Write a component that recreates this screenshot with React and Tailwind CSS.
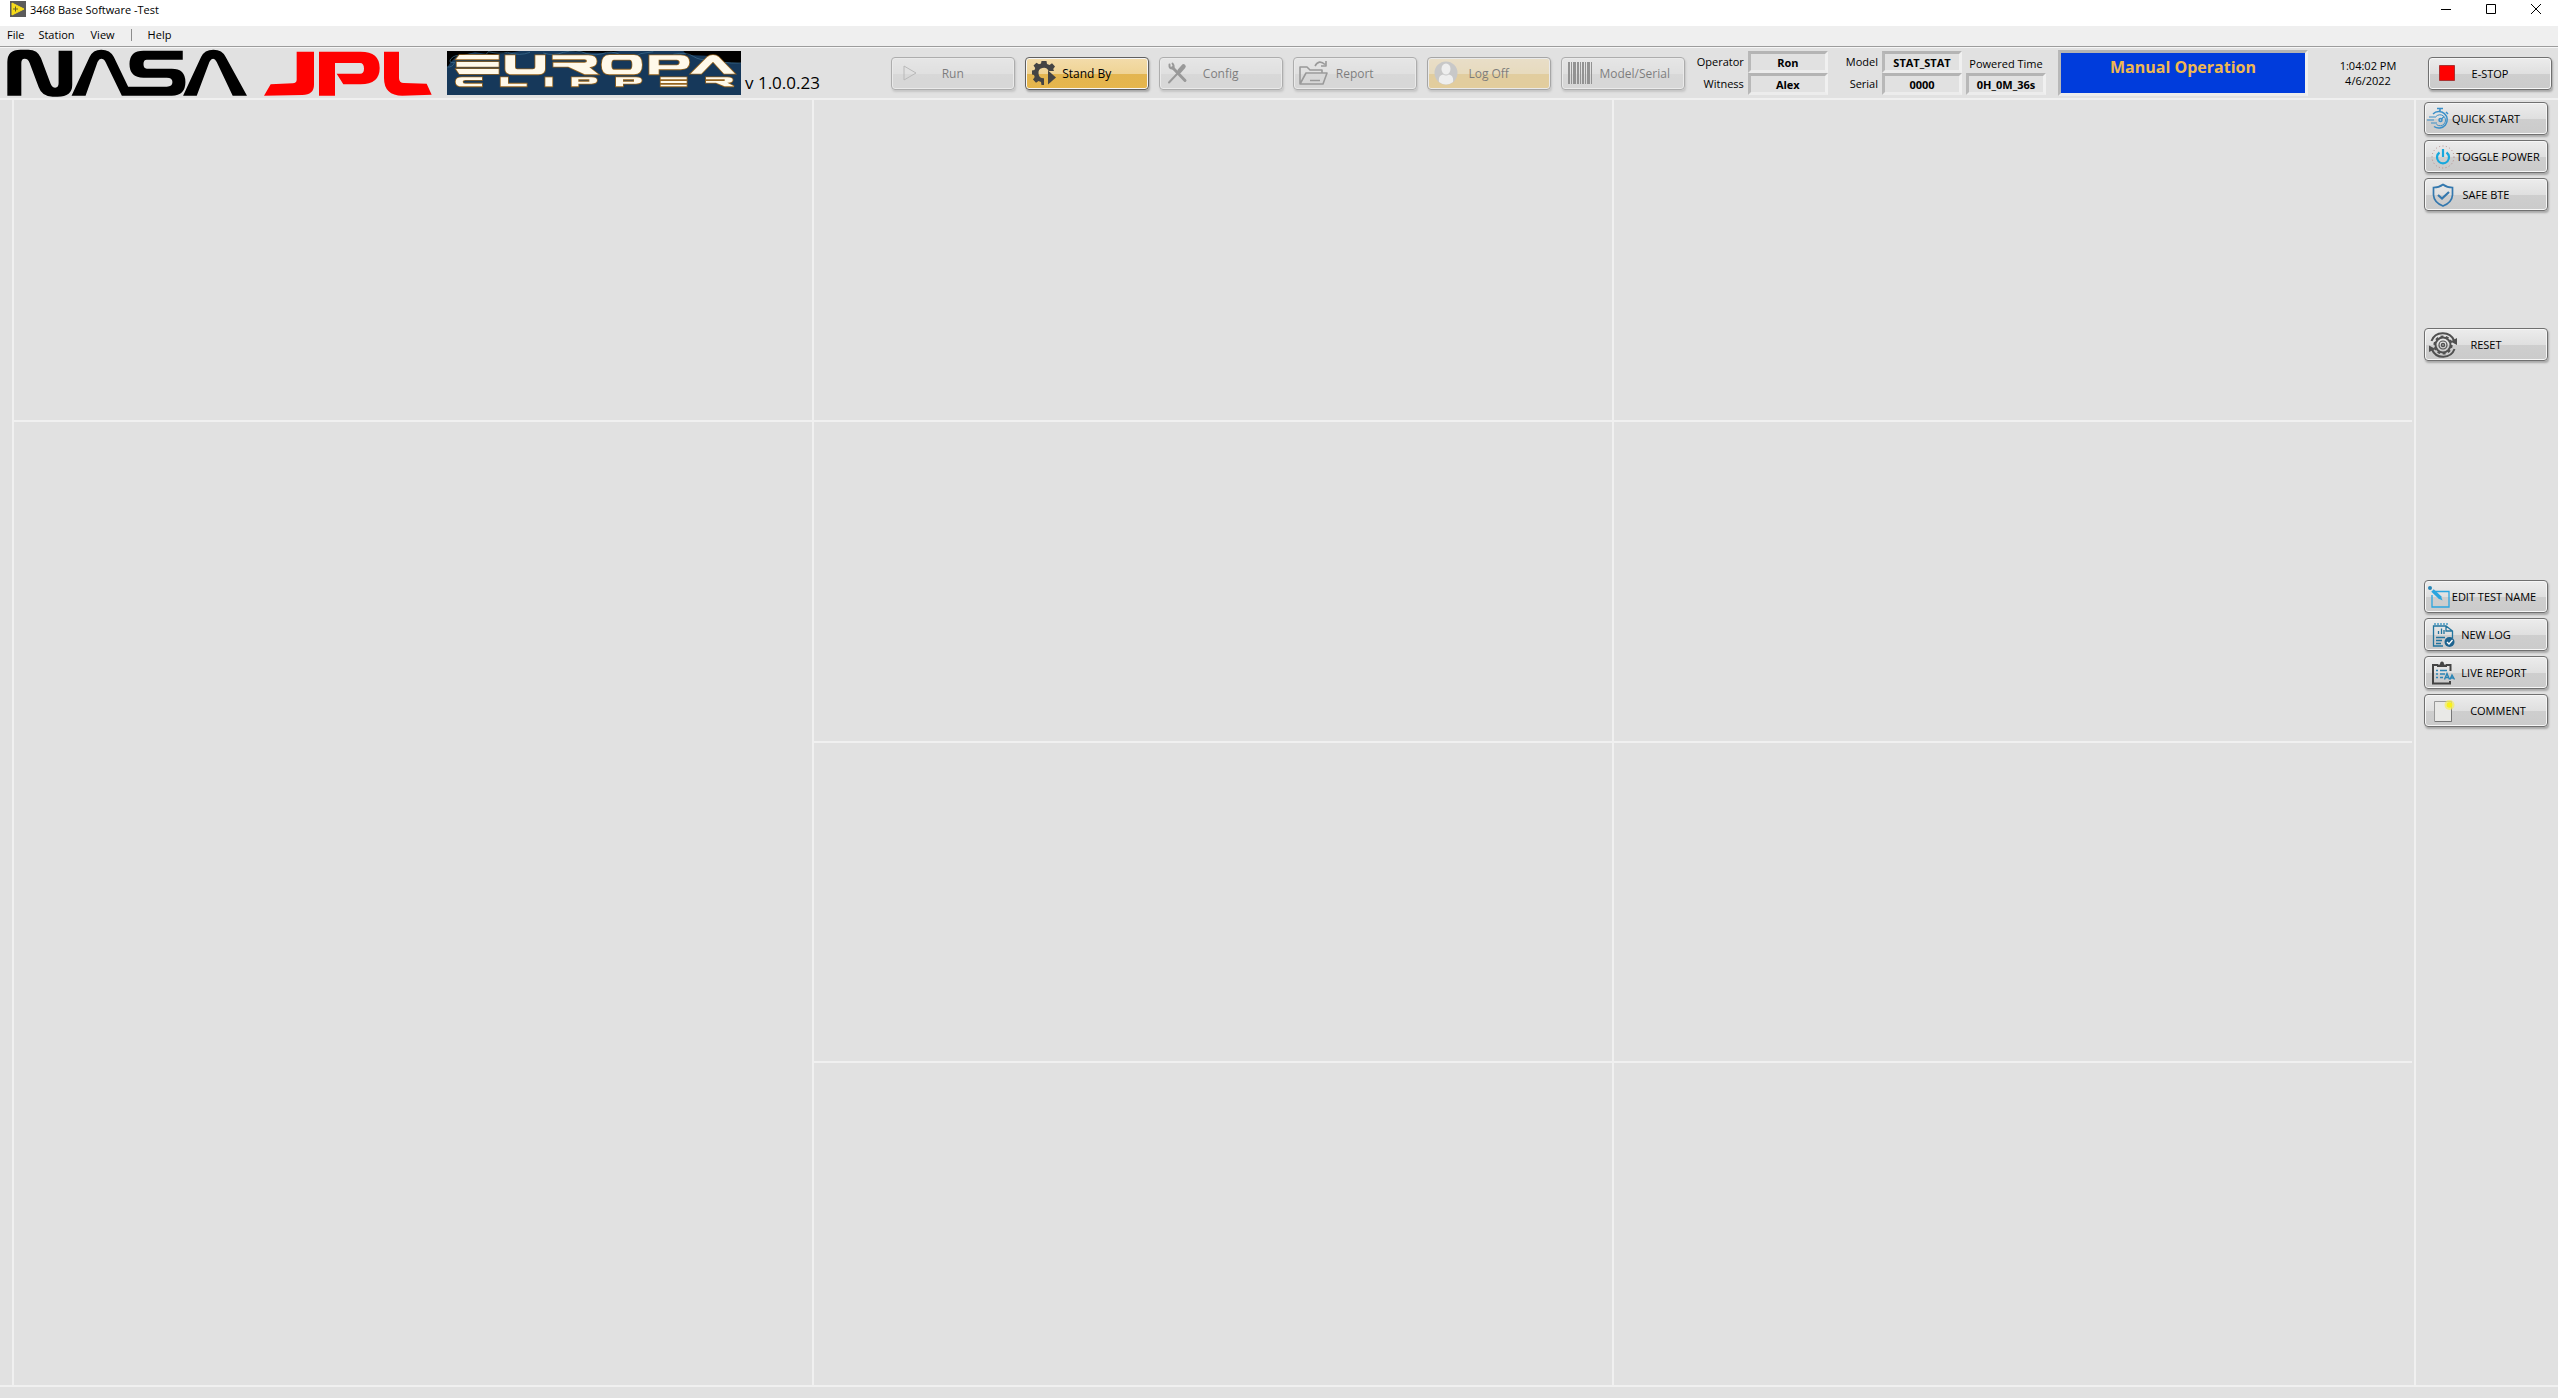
import React from "react";

function NasaLogo() {
  return (
    <svg role="img" aria-label="NASA" viewBox="20 148 724 144" className="h-12 w-[241px] shrink-0">
      <path d="M21 288V187Q21 150 60 150H84Q112 150 122 175L151 252Q156 264 165 264Q175 264 175 250V153H216V255Q216 291 172 291H157Q125 291 115 262L88 190Q84 177 73 177Q63 177 63 190V288Z" />
      <path d="M214 288L268 172Q278 150 303 150Q330 150 341 172L384 261H500Q517 261 517 247Q517 234 500 234H430Q388 234 388 193Q388 153 430 153H548V180H440Q430 180 430 193Q430 207 440 207H515Q556 207 556 247Q556 288 515 288H365L316 187Q311 177 303 177Q297 177 292 187L256 288Z" />
      <path d="M549 288L603 172Q613 150 640 150Q667 150 677 172L741 288H698L650 187Q645 177 639 177Q633 177 628 187L590 288Z" />
    </svg>
  );
}

function JplLogo() {
  return (
    <svg role="img" aria-label="JPL" viewBox="790 154 504 135" className="h-[45px] w-[168px] shrink-0" fill="#ff0000">
      <path d="M888 156H940V255Q940 285 905 286L790 288L810 254L876 251Q888 250 888 240Z" />
      <path fillRule="evenodd" d="M955 156H1080Q1137 156 1137 205Q1137 254 1080 254H1028L1008 222H1078Q1090 222 1090 207Q1090 190 1078 190H1003V288H955Z" />
      <path d="M1150 156H1195V235Q1195 250 1210 250L1278 252L1293 285L1205 288Q1150 288 1150 235Z" />
    </svg>
  );
}

function EuropaLogo() {
  return (
    <svg role="img" aria-label="Europa Clipper" viewBox="81 156 882 132" className="h-11 w-[294px] shrink-0 bg-[#16385a]">
      <path d="M81 156H300L225 168L165 160L110 172L92 190L81 206Z" fill="#000" />
      <path d="M430 156H600L560 162L480 160Z" fill="#000" />
      <path d="M790 156H963V193L900 188L860 170L800 168Z" fill="#000" />
      <g fill="none" stroke="#3f7394" strokeWidth="2">
        <path d="M81 204Q98 206 104 190Q84 194 92 180Q106 164 128 172Q150 160 172 170Q200 172 205 158Q240 166 262 160Q300 172 330 160" />
        <path d="M370 162Q400 172 430 160Q470 150 500 164Q530 172 560 160Q590 158 600 168Q640 180 662 164L700 158" />
        <path d="M760 166Q800 158 820 172Q840 186 870 180Q900 194 963 192" />
      </g>
      <g fill="#fff9ea" stroke="#94631f" strokeWidth="5" paintOrder="stroke" fillRule="evenodd">
        <path d="M118 168H236V181H108Z M110 189H236V203H110Z M108 210H236V225H118Z" />
        <path d="M256 169H285V205Q285 211 292 211H338Q346 211 346 205V169H375V211Q375 226 355 226H276Q256 226 256 211Z" />
        <path d="M398 169H505Q530 169 530 187Q530 203 508 205L535 226H494L445 203H400V191H493Q501 191 501 186Q501 181 493 181H398Z" />
        <path d="M568 168H642Q666 168 666 197Q666 226 642 226H568Q545 226 545 197Q545 168 568 168ZM582 182Q574 182 574 197Q574 212 582 212H629Q637 212 637 197Q637 182 629 182Z" />
        <path d="M688 226V169H782Q808 169 808 190Q808 211 782 211H716V226ZM716 182V199H770Q779 199 779 190Q779 182 770 182Z" />
        <path d="M812 224L862 174Q869 168 879 168Q889 168 896 174L945 224H912L879 188L844 224Z" />
        <path d="M186 235H126Q107 235 107 248Q107 262 126 262H186V254H136Q128 254 128 248Q128 243 136 243H186Z" />
        <path d="M242 235H264V254H320V262H242Z" />
        <path d="M376 235H397V262H376Z" />
        <path d="M455 235H514Q531 235 531 244Q531 254 514 254H475V262H455ZM475 241V248H508V241Z" />
        <path d="M588 235H648Q665 235 665 244Q665 254 648 254H609V262H588ZM609 241V248H642V241Z" />
        <path d="M722 235H800V241H722Z M722 246H800V252H722Z M722 257H800V262H722Z" />
        <path d="M858 235H922Q938 235 938 243Q938 251 922 251L942 262H914L888 251H858V246H914V241H858Z" />
      </g>
    </svg>
  );
}

const ICON = "h-6 w-6 shrink-0";

function RunIcon() {
  return (
    <svg viewBox="0 0 24 24" className={ICON} fill="none" stroke="#8a8a8a" strokeWidth="1">
      <path d="M6 5L18 12L6 19Z" />
    </svg>
  );
}

function GearPlayIcon() {
  return (
    <svg viewBox="0 0 24 24" className={ICON}>
      <g fill="#444">
        <path fillRule="evenodd" d="M9.5 0H14.5L15 3L17.5 4L20 2.3L23 5.5L21.2 8L22 10H16.5A5.2 5.2 0 1 0 12 17.2V24H9.5L9 21L6.5 20L4 21.7L1 18.5L2.7 16L2 14L0 13.5V9.5L2.5 9L3.2 7L1.5 4.5L4.5 1.8L7 3.3L9 2.6Z" />
        <path d="M16 9.5L24 16.5L16 23.5Z" />
      </g>
    </svg>
  );
}

function ToolsIcon() {
  return (
    <svg viewBox="0 0 24 24" className={ICON} fill="none" stroke="#444" strokeLinecap="round">
      <path d="M6.500 6.500L19 19.500" strokeWidth="3" />
      <path d="M3.500 3.500Q3 8 7 7.500Q8.500 5 6.500 2.500" strokeWidth="2" />
      <path d="M17.500 5.500L13.500 10" strokeWidth="4.500" />
      <path d="M12 12L3 21.500" strokeWidth="2" />
    </svg>
  );
}

function FolderIcon() {
  return (
    <svg viewBox="0 0 30 26" className="h-[26px] w-[30px] shrink-0" fill="none" stroke="#444" strokeWidth="1.600" strokeLinejoin="round">
      <path d="M2 24V7H9L12 10H24V13M2 24L8 13H29L25 24ZM12 20.500H22" />
      <path d="M17 6Q21 -1 27 4.500M28 1V6H23" />
    </svg>
  );
}

function UserIcon() {
  return (
    <svg viewBox="0 0 24 24" className={ICON}>
      <circle cx="12" cy="12" r="11.5" fill="#ababab" />
      <ellipse cx="12" cy="8" rx="4.500" ry="5.500" fill="#fff" />
      <path d="M5 21Q4 14.500 9 13.500Q12 15.500 15 13.500Q20 14.500 19 21Q12 26 5 21Z" fill="#fff" />
    </svg>
  );
}

function BarcodeIcon() {
  return (
    <svg viewBox="0 0 24 24" className={ICON} fill="#333">
      <path d="M0 1h2v22H0zM3 1h1v22H3zM5 1h3v22H5zM9 1h2v22H9zM12 1h1v22h-1zM14 1h2v22h-2zM17 1h1v22h-1zM19 1h3v22h-3zM23 1h1v22h-1z" />
    </svg>
  );
}

function StopIcon() {
  return (
    <svg viewBox="0 0 24 24" className={ICON}>
      <path d="M4.500 4.500h15v15h-15z" fill="#f00" stroke="#a33" strokeWidth="1" />
    </svg>
  );
}

function StopwatchIcon() {
  return (
    <svg viewBox="0 0 24 24" className={ICON} fill="none" stroke="#3a8fc8" strokeWidth="1.500">
      <path d="M10 1.500H16M13 2V5M19 5L21 7M6 7A8.300 8.300 0 1 1 7 19.500" />
      <path d="M9 9.500A5.500 5.500 0 1 1 9.500 17.500" strokeWidth="1" />
      <circle cx="13.500" cy="13" r="1.500" />
      <path d="M14.500 12L17 9.500M2 10H9M0 13H7M4 16H10" strokeWidth="1.200" />
    </svg>
  );
}

function PowerIcon() {
  return (
    <svg viewBox="0 0 24 24" className={ICON} fill="none">
      <circle cx="12" cy="12" r="11" stroke="#b58a8a" strokeWidth="1" strokeDasharray="1 2.400" />
      <path d="M8.500 7.500A6 6 0 1 0 15.500 7.500M12 4V12" stroke="#18a8dd" strokeWidth="2.200" />
    </svg>
  );
}

function ShieldIcon() {
  return (
    <svg viewBox="0 0 24 24" className={ICON} fill="none" stroke="#3478ae" strokeWidth="1.700">
      <path d="M12 1.500Q16 4.500 21.500 4.500V12Q21 19.500 12 23Q3 19.500 2.500 12V4.500Q8 4.500 12 1.500Z" />
      <path d="M7 12L11 15.500L18 9" strokeWidth="2.200" />
    </svg>
  );
}

function ResetIcon() {
  return (
    <svg viewBox="0 0 28 26" className="h-[26px] w-7 shrink-0" fill="none" stroke="#505050">
      <circle cx="14" cy="13" r="7.500" strokeWidth="2" />
      <circle cx="14" cy="13" r="8.800" strokeWidth="1.600" strokeDasharray="3 2.520" />
      <circle cx="14" cy="13" r="4" strokeWidth="1.200" />
      <circle cx="14" cy="13" r="1.500" strokeWidth="1.500" />
      <path d="M2.500 9A12 11.500 0 0 1 25 8.500M25.500 17A12 11.500 0 0 1 3 17.500" strokeWidth="2" />
      <path d="M28 6V13L21.500 9.500ZM0 20V13.500L6.500 17Z" fill="#505050" stroke="none" />
    </svg>
  );
}

function EditIcon() {
  return (
    <svg viewBox="0 0 24 24" className={ICON} fill="none" stroke="#2aa5df">
      <path d="M8 6.500H22V22H5V10" strokeWidth="1.300" />
      <path d="M5.500 5.500L13.500 13" strokeWidth="3.600" />
      <circle cx="3" cy="3" r="2" fill="#2787b8" stroke="none" />
      <path d="M15.500 15.500L11.500 13.500L14 11.500Z" fill="#2aa5df" stroke="none" />
    </svg>
  );
}

function LogIcon() {
  return (
    <svg viewBox="0 0 24 24" className={ICON} fill="none" stroke="#22749e" strokeWidth="1.300">
      <path d="M12 23H2.500V3H15L21.500 8V15M15 3V8H21.500M7.500 11V8M10.500 11V5.500M13 11V7M5 14.500H14M5 17.500H11M5 20.500H10" />
      <path d="M3 1H18" stroke="#4a9bc2" strokeDasharray="2 1" />
      <circle cx="18.500" cy="19" r="5" fill="#1d638f" stroke="none" />
      <path d="M16 19L18 21L21.500 17" stroke="#fff" />
    </svg>
  );
}

function ReportIcon() {
  return (
    <svg viewBox="0 0 24 24" className={ICON} fill="none">
      <path d="M7 4H2V22.500H19V20M15 4H19.500V10" stroke="#444" strokeWidth="2" />
      <path d="M6 6V3.500H9Q9 0.500 11 0.500Q13 0.500 13 3.500H16V6Z" fill="#444" />
      <path d="M5 9.500H7M9 9.500H16M5 13H7M9 13H14M5 16.500H7M9 16.500H12" stroke="#2c86b8" strokeWidth="1.300" />
      <path d="M13.500 18.500L16 12.500L18.500 18.500M14.500 16.500H17.500M19 18.500L21 14L23.500 18.500M20 17H23" stroke="#2a84b4" strokeWidth="1.400" />
    </svg>
  );
}

function NoteIcon() {
  return (
    <svg viewBox="0 0 24 24" className={ICON}>
      <path d="M3.500 2.500H20.500V22.500H3.500Z" fill="#e9e9e7" stroke="#999" />
      <path d="M4 22.500H20.500V9" fill="none" stroke="#777" />
      <circle cx="18.500" cy="6" r="5" fill="#f5ee58" opacity="0.700" />
      <circle cx="18.500" cy="6" r="2.800" fill="#f8f01c" />
    </svg>
  );
}

const LOOKS = {
  plain: "border-[#707070] bg-[linear-gradient(#ececec,#dfdfdf_52%,#cecece_53%,#cbcbcb)] text-black",
  off: "border-[#707070] bg-[linear-gradient(#ececec,#dfdfdf_52%,#cecece_53%,#cbcbcb)] text-black opacity-45",
  gold: "border-[#606060] bg-[linear-gradient(#f3dcab,#efd394_52%,#e3b550_53%,#e6b64c)] text-black",
  goldOff: "border-[#606060] bg-[linear-gradient(#f3dcab,#efd394_52%,#e3b550_53%,#e6b64c)] text-black opacity-45",
};

function Button({ icon, label, look = "plain", inset = "pl-1.5", shift = "", size = "text-[12px]" }) {
  return (
    <button
      type="button"
      disabled={look === "off" || look === "goldOff"}
      className={`grid h-[33px] w-31 shrink-0 items-center rounded-[4px] border shadow-[inset_0_0_0_1px_#f6f6f6,1px_2px_2px_#a8a8a8] ${LOOKS[look]}`}
    >
      <span className={`col-start-1 row-start-1 justify-self-start ${inset}`}>{icon}</span>
      <span className={`col-start-1 row-start-1 pt-0.5 whitespace-nowrap ${size} ${shift}`}>{label}</span>
    </button>
  );
}

function Field({ id, label, value }) {
  return (
    <>
      <label htmlFor={id} className="text-right">{label}</label>
      <input
        id={id}
        readOnly
        defaultValue={value}
        className="h-[22px] w-20 border-3 border-t-[#b4b4b4] border-r-[#f0f0f0] border-b-[#ececec] border-l-[#b8b8b8] bg-[#e1e1e1] text-center text-[11px] font-bold"
      />
    </>
  );
}

function Panels() {
  const cell = "bg-[#e1e1e1]";
  return (
    <main className="mr-0.5 ml-3 grid grow grid-cols-3 grid-rows-[320fr_319fr_318fr_322fr] gap-0.5 bg-[#f0f0f0] pl-0.5">
      <section className={cell} />
      <section className={cell} />
      <section className={cell} />
      <section className={`${cell} row-span-3`} />
      <section className={cell} />
      <section className={cell} />
      <section className={cell} />
      <section className={cell} />
      <section className={cell} />
      <section className={cell} />
    </main>
  );
}

export default function App() {
  return (
    <div className="flex min-h-screen flex-col bg-[#e1e1e1] font-['Open_Sans','Noto_Sans',sans-serif] text-[11px] text-black">
      <header className="flex h-[26px] items-start bg-white pl-2.5">
        <svg viewBox="0 0 16 16" className="mt-px size-4">
          <path d="M0 0H16V16H0Z" fill="#5b5b5b" />
          <path d="M2 2L14 8L2 14Z" fill="#f7dc1b" stroke="#f7dc1b" strokeLinejoin="round" />
          <path d="M3 8H8M5.500 5.500V10.500" stroke="#6a6222" />
        </svg>
        <h1 className="ml-1 text-[11px] leading-5">3468 Base Software -Test</h1>
        <div className="ml-auto flex">
          <button type="button" aria-label="Minimize" className="grid h-[18px] w-[45px] place-items-center">
            <svg viewBox="0 0 12 12" className="size-3" fill="none" stroke="#000"><path d="M1 6.500H11" /></svg>
          </button>
          <button type="button" aria-label="Maximize" className="grid h-[18px] w-[45px] place-items-center">
            <svg viewBox="0 0 12 12" className="size-3" fill="none" stroke="#000"><path d="M1.500 1.500H10.500V10.500H1.500Z" /></svg>
          </button>
          <button type="button" aria-label="Close" className="grid h-[18px] w-[45px] place-items-center">
            <svg viewBox="0 0 12 12" className="size-3" fill="none" stroke="#000"><path d="M1 1L11 11M11 1L1 11" /></svg>
          </button>
        </div>
      </header>

      <nav className="flex h-[21px] items-center border-b border-[#9c9c9c] bg-[#efefef] pb-0.5 pl-[7px]">
        <button type="button">File</button>
        <button type="button" className="ml-3.5">Station</button>
        <button type="button" className="ml-4">View</button>
        <span className="ml-4 h-3 border-l border-[#8c8c8c]" />
        <button type="button" className="ml-4">Help</button>
      </nav>

      <div className="flex h-[53px] items-center border-t border-b-2 border-t-[#f6f6f6] border-b-[#f0f0f0] pl-[7px]">
        <NasaLogo />
        <div className="ml-4 flex grow items-center">
          <JplLogo />
          <div className="ml-[15px]"><EuropaLogo /></div>
          <span className="ml-1 pt-5 text-[17px] leading-6">v 1.0.0.23</span>
        </div>

        <div className="flex gap-2.5">
          <Button look="off" icon={<RunIcon />} label="Run" />
          <Button look="gold" icon={<GearPlayIcon />} label="Stand By" />
          <Button look="off" icon={<ToolsIcon />} label="Config" inset="pl-1.5" />
          <Button look="off" icon={<FolderIcon />} label="Report" inset="pl-1" />
          <Button look="goldOff" icon={<UserIcon />} label="Log Off" />
          <Button look="off" icon={<BarcodeIcon />} label="Model/Serial" shift="pl-6" />
        </div>

        <div className="ml-3 grid grid-cols-[auto_auto] items-center gap-x-1">
          <Field id="operator" label="Operator" value="Ron" />
          <Field id="witness" label="Witness" value="Alex" />
        </div>
        <div className="ml-[18px] grid grid-cols-[auto_auto] items-center gap-x-1">
          <Field id="model" label="Model" value="STAT_STAT" />
          <Field id="serial" label="Serial" value="0000" />
        </div>
        <div className="ml-1 flex flex-col items-center">
          <label htmlFor="powered" className="pt-1 leading-[18px]">Powered Time</label>
          <input
            id="powered"
            readOnly
            defaultValue="0H_0M_36s"
            className="h-[22px] w-20 border-3 border-t-[#b4b4b4] border-r-[#f0f0f0] border-b-[#ececec] border-l-[#b8b8b8] bg-[#e1e1e1] text-center text-[11px] font-bold"
          />
        </div>
        <div role="status" className="ml-3 h-[46px] w-[250px] border-3 border-t-[#b4b4b4] border-r-[#f0f0f0] border-b-[#ececec] border-l-[#b8b8b8] bg-[#003cdc] pt-0.5 text-center text-[16px] leading-6 font-bold text-[#f0b850]">
          Manual Operation
        </div>
        <div className="w-30 text-center leading-[15px]">
          <p>1:04:02 PM</p>
          <p>4/6/2022</p>
        </div>
        <div className="mr-1.5">
          <Button icon={<StopIcon />} label="E-STOP" size="text-[11px]" />
        </div>
      </div>

      <div className="flex grow">
        <Panels />
        <aside className="flex w-36 shrink-0 flex-col gap-[5px] border-l-2 border-[#f0f0f0] pt-0.5 pl-2">
          <Button icon={<StopwatchIcon />} label="QUICK START" inset="pl-0.5" size="text-[11px]" />
          <Button icon={<PowerIcon />} label="TOGGLE POWER" shift="pl-6" size="text-[11px]" />
          <Button icon={<ShieldIcon />} label="SAFE BTE" size="text-[11px]" />
          <div className="mt-28">
            <Button icon={<ResetIcon />} label="RESET" inset="pl-1" size="text-[11px]" />
          </div>
          <div className="mt-[214px]">
            <Button icon={<EditIcon />} label="EDIT TEST NAME" inset="pl-0.5" shift="pl-4" size="text-[11px]" />
          </div>
          <Button icon={<LogIcon />} label="NEW LOG" size="text-[11px]" />
          <Button icon={<ReportIcon />} label="LIVE REPORT" shift="pl-4" size="text-[11px]" />
          <Button icon={<NoteIcon />} label="COMMENT" shift="pl-6" size="text-[11px]" />
        </aside>
      </div>

      <footer className="h-[13px] border-t-2 border-[#f0f0f0]" />
    </div>
  );
}
